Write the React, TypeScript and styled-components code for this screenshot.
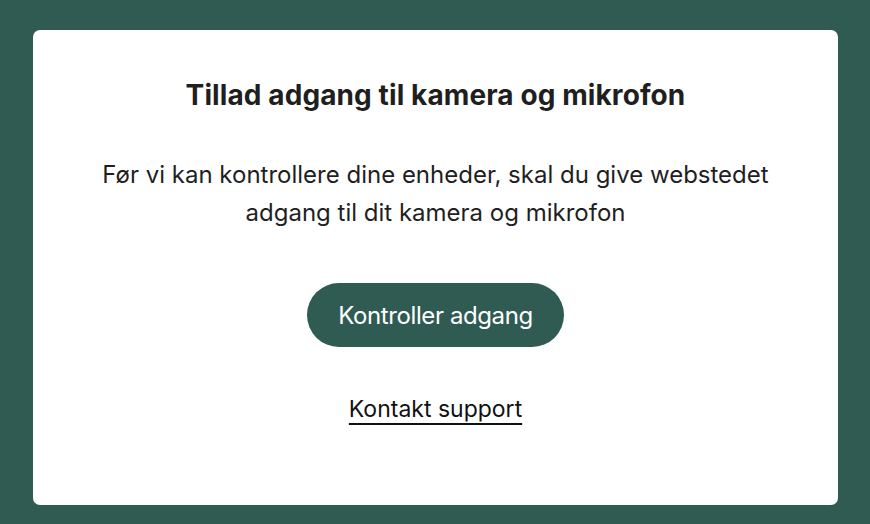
import React from "react";
import styled, { createGlobalStyle } from "styled-components";

const GlobalStyle = createGlobalStyle`
  html, body {
    margin: 0;
    padding: 0;
    background: #305b53;
  }
  body {
    font-family: Inter, "Noto Sans", sans-serif;
    -webkit-font-smoothing: antialiased;
  }
`;

const Page = styled.div`
  box-sizing: border-box;
  width: 870px;
  height: 524px;
  padding: 30px 32px 19px 33px;
  display: flex;
`;

const Card = styled.section`
  flex: 1;
  background: #ffffff;
  border-radius: 7px;
  display: flex;
  flex-direction: column;
  align-items: center;
  padding-top: 47px;
  text-align: center;
  color: #1f1f1f;
`;

const Title = styled.h1`
  margin: 0;
  font-size: 28px;
  line-height: 36px;
  font-weight: 700;
  letter-spacing: 0.1px;
`;

const Body = styled.p`
  margin: 43px 0 0;
  font-size: 24px;
  line-height: 38px;
  font-weight: 400;
  max-width: 740px;
`;

const PrimaryButton = styled.button`
  margin-top: 51px;
  height: 64px;
  padding: 0 31px;
  border: none;
  border-radius: 32px;
  background: #305b53;
  color: #ffffff;
  font-family: inherit;
  font-size: 24px;
  letter-spacing: -0.4px;
  cursor: pointer;
`;

const SupportLink = styled.a`
  margin-top: 48px;
  font-size: 23px;
  line-height: 28px;
  color: #111111;
  text-decoration: underline;
  text-decoration-thickness: 1.5px;
  text-underline-offset: 6px;
  cursor: pointer;
`;

export default function App() {
  return (
    <>
      <GlobalStyle />
      <Page>
        <Card>
          <Title>Tillad adgang til kamera og mikrofon</Title>
          <Body>
            Før vi kan kontrollere dine enheder, skal du give webstedet
            <br />
            adgang til dit kamera og mikrofon
          </Body>
          <PrimaryButton type="button">Kontroller adgang</PrimaryButton>
          <SupportLink href="#">Kontakt support</SupportLink>
        </Card>
      </Page>
    </>
  );
}
